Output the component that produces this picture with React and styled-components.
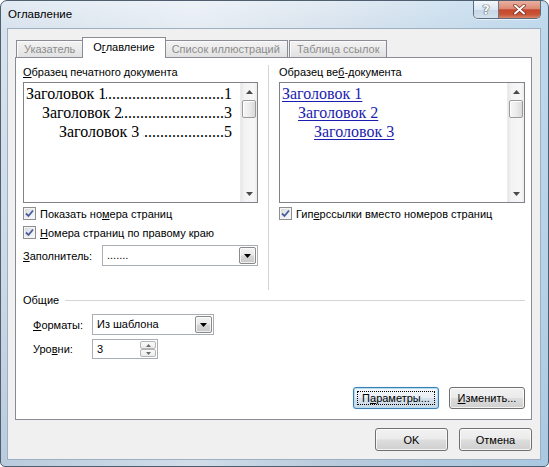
import React from "react";
import styled, { createGlobalStyle } from "styled-components";

const Global = createGlobalStyle`
  html, body { margin: 0; padding: 0; background: #fff; }
  body { font-family: "Liberation Sans", Arial, sans-serif; font-size: 11px; color: #000; }
  * { box-sizing: border-box; }
`;

const UI = `"Liberation Sans", Arial, sans-serif`;
const SERIF = `"Liberation Serif", "Times New Roman", serif`;
const FS = 11;

const Window = styled.div`
  width: 549px;
  height: 467px;
  border: 1px solid #4f5f70;
  border-radius: 7px 7px 5px 5px;
  background:
    linear-gradient(90deg, rgba(255,255,255,0) 0%, rgba(255,255,255,0.35) 35%, rgba(255,255,255,0) 60%, rgba(140,196,232,0.35) 100%),
    linear-gradient(180deg, #e3ebf3 0%, #d7e2ed 30px, #cbd9e7 60%, #b9cbdd 100%);
  display: flex;
  flex-direction: column;
  padding: 0 7px 6px 6px;
  overflow: hidden;
`;

const TitleBar = styled.div`
  height: 27px;
  display: flex;
  align-items: flex-start;
`;

const TitleText = styled.div`
  font-family: ${UI};
  font-size: 11.5px;
  color: #000;
  padding: 7px 0 0 1px;
`;

const CaptionGroup = styled.div`
  margin-left: auto;
  display: flex;
  height: 18px;
  border: 1px solid #5e6d7e;
  border-top: none;
  border-radius: 0 0 5px 5px;
  overflow: hidden;
  box-shadow: 0 1px 0 rgba(255,255,255,0.6);
`;

const HelpBtn = styled.div`
  width: 25px;
  display: flex;
  align-items: center;
  justify-content: center;
  background: linear-gradient(180deg, rgba(255,255,255,0.75) 0%, rgba(226,234,242,0.7) 50%, rgba(196,210,224,0.7) 51%, rgba(214,226,238,0.8) 100%);
  border-right: 1px solid #6a7888;
  font-family: "DejaVu Sans", sans-serif;
  font-size: 13px;
  font-weight: bold;
  color: #ffffff;
  text-shadow: 0 0 1px #44515f, 0 0 1px #44515f, 0 0 1px #44515f;
`;

const CloseBtn = styled.div`
  width: 41px;
  display: flex;
  align-items: center;
  justify-content: center;
  background: linear-gradient(180deg, #eab0a2 0%, #dc8a74 45%, #c6472e 52%, #c85438 80%, #d9866a 100%);
`;

const Client = styled.div`
  flex: 1;
  display: flex;
  flex-direction: column;
  background: #f0f0f0;
  border: 1px solid #9eafc1;
  padding: 8px 8px 8px 7px;
`;

const TabStrip = styled.div`
  height: 20px;
  display: flex;
  align-items: flex-end;
  padding-left: 1px;
`;

const Tab = styled.div`
  position: relative;
  font-family: ${UI};
  font-size: ${FS}px;
  white-space: nowrap;
  border: 1px solid #898c95;
  border-bottom: none;
  height: ${(p) => (p.$active ? 21 : 17)}px;
  line-height: ${(p) => (p.$active ? 19 : 16)}px;
  padding: 0 ${(p) => (p.$active ? 10 : 7)}px;
  margin: 0 ${(p) => (p.$active ? "-2px" : "1px")} ${(p) => (p.$active ? "-1px" : "0")} ${(p) => (p.$active ? "-2px" : "0")};
  color: ${(p) => (p.$active ? "#000" : "#8c8c8c")};
  background: ${(p) =>
    p.$active ? "#ffffff" : "linear-gradient(180deg, #f3f3f3 0%, #ebebeb 50%, #e1e1e1 100%)"};
  box-shadow: ${(p) => (p.$active ? "none" : "inset 1px 1px 0 #fbfbfb")};
  z-index: ${(p) => (p.$active ? 2 : 1)};
`;

const Panel = styled.div`
  flex: 1;
  display: flex;
  flex-direction: column;
  background: #ffffff;
  border: 1px solid #898c95;
  padding: 6px 6px 10px 7px;
`;

const TopSection = styled.div`
  display: flex;
  height: 226px;
`;

const Column = styled.div`
  width: ${(p) => p.$w}px;
  display: flex;
  flex-direction: column;
`;

const VDivider = styled.div`
  width: 1px;
  background: #d5d5d5;
  margin: 1px 10px 0;
`;

const Label = styled.div`
  font-family: ${UI};
  font-size: ${FS}px;
  line-height: 16px;
  height: 16px;
  white-space: nowrap;
  color: #000;
`;

const U = styled.span`
  text-decoration: underline;
`;

const ListBox = styled.div`
  margin-top: 2px;
  height: 121px;
  border: 1px solid #7f8389;
  background: #fff;
  display: flex;
`;

const ListContent = styled.div`
  flex: 1;
  padding: 1px 8px 0 2px;
  overflow: hidden;
`;

const TocRow = styled.div`
  display: flex;
  font-family: ${SERIF};
  font-size: 16px;
  line-height: 19px;
  height: 19px;
  padding-left: ${(p) => p.$indent}px;
  white-space: nowrap;
`;

const Leader = styled.span`
  flex: 1;
  overflow: hidden;
  direction: rtl;
  margin-left: ${(p) => (p.$gap ? 4 : 0)}px;
  &::after {
    content: "....................................................................................................";
  }
`;

const LinkRow = styled.div`
  font-family: ${SERIF};
  font-size: 16px;
  line-height: 19px;
  height: 19px;
  padding-left: ${(p) => p.$indent}px;
  white-space: nowrap;
  color: #1c1cb0;
  & > span {
    text-decoration: underline;
    text-underline-offset: 2px;
  }
`;

const ScrollBar = styled.div`
  width: 17px;
  display: flex;
  flex-direction: column;
  background: linear-gradient(90deg, #e6e6e6 0%, #f3f3f3 20%, #f7f7f7 80%, #ececec 100%);
  border-left: 1px solid #ececec;
`;

const ArrowBtn = styled.div`
  height: 17px;
  display: flex;
  align-items: center;
  justify-content: center;
`;

const Thumb = styled.div`
  height: 18px;
  margin: 0 1px;
  border: 1px solid #9b9b9b;
  border-radius: 2px;
  background: linear-gradient(90deg, #f6f6f6 0%, #ececec 50%, #dadada 100%);
  box-shadow: inset 1px 1px 0 #fff;
`;

const Track = styled.div`
  flex: 1;
`;

const CheckRow = styled.div`
  display: flex;
  align-items: center;
  gap: 4px;
  height: 19px;
  margin-top: ${(p) => p.$mt || 0}px;
  font-family: ${UI};
  font-size: ${FS}px;
  white-space: nowrap;
`;

const CheckBox = styled.div`
  width: 13px;
  height: 13px;
  border: 1px solid #8e8f8f;
  background: linear-gradient(135deg, #d4d6da 0%, #eceef0 55%, #fafafa 100%);
  box-shadow: inset 0 0 0 1px #f4f4f4;
  display: flex;
  align-items: center;
  justify-content: center;
`;

const FieldRow = styled.div`
  display: flex;
  align-items: center;
  margin-top: ${(p) => p.$mt || 0}px;
  padding-left: ${(p) => p.$pl || 0}px;
`;

const FieldLabel = styled.div`
  width: ${(p) => p.$w}px;
  font-family: ${UI};
  font-size: ${FS}px;
  white-space: nowrap;
`;

const Combo = styled.div`
  width: ${(p) => p.$w}px;
  height: 21px;
  border: 1px solid #a9aeb5;
  background: #fff;
  display: flex;
  align-items: stretch;
  padding: 1px;
`;

const ComboText = styled.div`
  flex: 1;
  font-family: ${UI};
  font-size: ${FS}px;
  line-height: 17px;
  padding-left: 3px;
  white-space: nowrap;
`;

const DropBtn = styled.div`
  width: 17px;
  border: 1px solid #8a8a8a;
  border-radius: 2px;
  background: linear-gradient(180deg, #f2f2f2 0%, #ebebeb 45%, #d6d6d6 55%, #cacaca 100%);
  box-shadow: inset 0 0 0 1px rgba(255,255,255,0.7);
  display: flex;
  align-items: center;
  justify-content: center;
`;

const Spinner = styled.div`
  width: 66px;
  height: 20px;
  border: 1px solid #a9aeb5;
  background: #fff;
  display: flex;
  padding: 1px;
`;

const SpinBtns = styled.div`
  width: 16px;
  display: flex;
  flex-direction: column;
`;

const SpinBtn = styled.div`
  flex: 1;
  border: 1px solid #b5b5b5;
  border-radius: 2px;
  background: linear-gradient(180deg, #fafafa 0%, #ececec 100%);
  display: flex;
  align-items: center;
  justify-content: center;
`;

const GroupHeader = styled.div`
  display: flex;
  align-items: center;
  height: 16px;
  margin-top: 2px;
  font-family: ${UI};
  font-size: ${FS}px;
  & > i {
    flex: 1;
    height: 1px;
    background: #d5d5d5;
    margin-left: 6px;
  }
`;

const Spacer = styled.div`
  flex: 1;
`;

const ButtonRow = styled.div`
  display: flex;
  justify-content: flex-end;
  gap: ${(p) => p.$gap}px;
  margin-top: ${(p) => p.$mt || 0}px;
`;

const Button = styled.div`
  width: ${(p) => p.$w}px;
  height: ${(p) => p.$h || 23}px;
  border: 1px solid ${(p) => (p.$default ? "#3c7fb1" : "#707070")};
  border-radius: 3px;
  background: ${(p) =>
    p.$default
      ? "linear-gradient(180deg, #f4f8fb 0%, #e9eff5 48%, #d7e2ec 52%, #cbd9e6 100%)"
      : "linear-gradient(180deg, #f2f2f2 0%, #ebebeb 48%, #dddddd 52%, #cfcfcf 100%)"};
  box-shadow: ${(p) =>
    p.$default ? "inset 0 0 0 1px #b6dcf2, 0 0 1px #7fb4dc" : "inset 0 0 0 1px rgba(255,255,255,0.75)"};
  display: flex;
  align-items: center;
  justify-content: center;
  font-family: ${UI};
  font-size: ${FS}px;
  color: #000;
  padding: 3px;
`;

const FocusRect = styled.div`
  width: 100%;
  height: 100%;
  border: 1px dotted #000;
  display: flex;
  align-items: center;
  justify-content: center;
`;

const Tri = ({ up }) => (
  <svg width="7" height="4" viewBox="0 0 7 4">
    <path d={up ? "M0 4 L3.5 0 L7 4 Z" : "M0 0 L7 0 L3.5 4 Z"} fill="#4a4a4a" />
  </svg>
);

const ComboTri = () => (
  <svg width="7" height="4" viewBox="0 0 7 4">
    <path d="M0 0 L7 0 L3.5 4 Z" fill="#000" />
  </svg>
);

const SmallTri = ({ up }) => (
  <svg width="5" height="3" viewBox="0 0 5 3">
    <path d={up ? "M0 3 L2.5 0 L5 3 Z" : "M0 0 L5 0 L2.5 3 Z"} fill="#6a6a6a" />
  </svg>
);

const Check = () => (
  <svg width="9" height="9" viewBox="0 0 9 9">
    <path d="M1 4.5 L3.5 7 L8 1.5" fill="none" stroke="#4b5c9c" strokeWidth="1.8" />
  </svg>
);

const ScrollV = () => (
  <ScrollBar>
    <ArrowBtn>
      <Tri up />
    </ArrowBtn>
    <Thumb />
    <Track />
    <ArrowBtn>
      <Tri />
    </ArrowBtn>
  </ScrollBar>
);

const Checked = ({ children }) => (
  <>
    <CheckBox>
      <Check />
    </CheckBox>
    <span>{children}</span>
  </>
);

export default function App() {
  return (
    <>
      <Global />
      <Window>
        <TitleBar>
          <TitleText>Оглавление</TitleText>
          <CaptionGroup>
            <HelpBtn>?</HelpBtn>
            <CloseBtn>
              <svg width="13" height="11" viewBox="0 0 13 11">
                <path d="M2 1.5 L11 9.5 M11 1.5 L2 9.5" stroke="#7a2d1f" strokeWidth="3.4" strokeLinecap="round" />
                <path d="M2 1.5 L11 9.5 M11 1.5 L2 9.5" stroke="#ffffff" strokeWidth="1.9" strokeLinecap="round" />
              </svg>
            </CloseBtn>
          </CaptionGroup>
        </TitleBar>
        <Client>
          <TabStrip>
            <Tab>Указатель</Tab>
            <Tab $active>
              О<U>г</U>лавление
            </Tab>
            <Tab>Список иллюстраций</Tab>
            <Tab>Таблица ссылок</Tab>
          </TabStrip>
          <Panel>
            <TopSection>
              <Column $w={235}>
                <Label>
                  <U>О</U>бразец печатного документа
                </Label>
                <ListBox>
                  <ListContent>
                    <TocRow $indent={0}>
                      <span>Заголовок 1</span>
                      <Leader />
                      <span>1</span>
                    </TocRow>
                    <TocRow $indent={16}>
                      <span>Заголовок 2</span>
                      <Leader />
                      <span>3</span>
                    </TocRow>
                    <TocRow $indent={33}>
                      <span>Заголовок 3</span>
                      <Leader $gap />
                      <span>5</span>
                    </TocRow>
                  </ListContent>
                  <ScrollV />
                </ListBox>
                <CheckRow $mt={1}>
                  <Checked>
                    Показать но<U>м</U>ера страниц
                  </Checked>
                </CheckRow>
                <CheckRow>
                  <Checked>
                    <U>Н</U>омера страниц по правому краю
                  </Checked>
                </CheckRow>
                <FieldRow $mt={3}>
                  <FieldLabel $w={79}>
                    <U>З</U>аполнитель:
                  </FieldLabel>
                  <Combo $w={156}>
                    <ComboText>.......</ComboText>
                    <DropBtn>
                      <ComboTri />
                    </DropBtn>
                  </Combo>
                </FieldRow>
              </Column>
              <VDivider />
              <Column $w={246}>
                <Label>
                  Образец ве<U>б</U>-документа
                </Label>
                <ListBox>
                  <ListContent>
                    <LinkRow $indent={0}>
                      <span>Заголовок 1</span>
                    </LinkRow>
                    <LinkRow $indent={16}>
                      <span>Заголовок 2</span>
                    </LinkRow>
                    <LinkRow $indent={32}>
                      <span>Заголовок 3</span>
                    </LinkRow>
                  </ListContent>
                  <ScrollV />
                </ListBox>
                <CheckRow $mt={1}>
                  <Checked>
                    Гип<U>е</U>рссылки вместо номеров страниц
                  </Checked>
                </CheckRow>
              </Column>
            </TopSection>
            <GroupHeader>
              Общие
              <i />
            </GroupHeader>
            <FieldRow $mt={6} $pl={10}>
              <FieldLabel $w={59}>
                <U>Ф</U>орматы:
              </FieldLabel>
              <Combo $w={122}>
                <ComboText>Из шаблона</ComboText>
                <DropBtn>
                  <ComboTri />
                </DropBtn>
              </Combo>
            </FieldRow>
            <FieldRow $mt={4} $pl={10}>
              <FieldLabel $w={59}>
                Уро<U>в</U>ни:
              </FieldLabel>
              <Spinner>
                <ComboText>3</ComboText>
                <SpinBtns>
                  <SpinBtn>
                    <SmallTri up />
                  </SpinBtn>
                  <SpinBtn>
                    <SmallTri />
                  </SpinBtn>
                </SpinBtns>
              </Spinner>
            </FieldRow>
            <Spacer />
            <ButtonRow $gap={10}>
              <Button $w={86} $h={22} $default>
                <FocusRect>
                  П<U>а</U>раметры...
                </FocusRect>
              </Button>
              <Button $w={76} $h={22}>
                <U>И</U>зменить...
              </Button>
            </ButtonRow>
          </Panel>
          <ButtonRow $gap={11} $mt={8}>
            <Button $w={73}>OK</Button>
            <Button $w={73}>Отмена</Button>
          </ButtonRow>
        </Client>
      </Window>
    </>
  );
}
